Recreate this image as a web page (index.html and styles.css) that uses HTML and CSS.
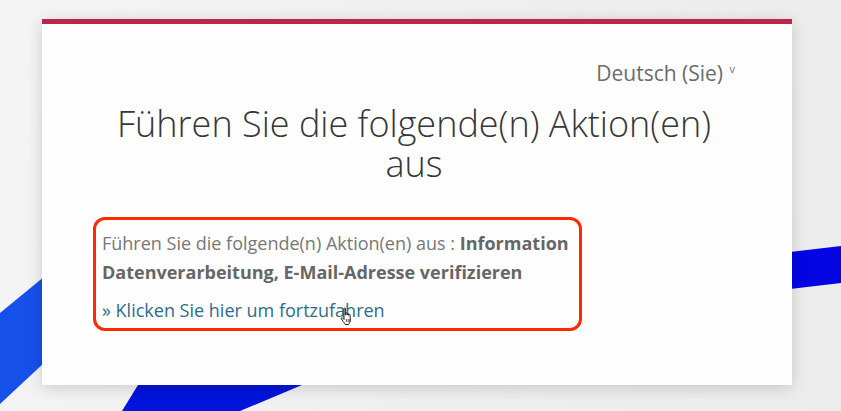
FILE: index.html
```html
<!DOCTYPE html>
<html lang="de">
<head>
    <meta charset="UTF-8">
    <meta name="viewport" content="width=device-width, initial-scale=1.0">
    <title>Aktionen erforderlich</title>
    <link rel="stylesheet" href="styles.css">
</head>
<body>
    <svg class="backdrop" width="841" height="411" viewBox="0 0 841 411" aria-hidden="true">
        <polygon points="0,313 45,276 45,362 0,404" fill="#1550ea"/>
        <polygon points="122,411 138,385 302,385 240,411" fill="#0014dc"/>
        <polygon points="790,252 841,246 841,283 790,289" fill="#0505e4"/>
    </svg>

    <div class="card">
        <div class="lang">Deutsch (Sie) <span class="caret">v</span></div>

        <h1 class="title">Führen Sie die folgende(n) Aktion(en) aus</h1>

        <div class="actions">
            <p class="required">Führen Sie die folgende(n) Aktion(en) aus : <b>Information Datenverarbeitung, E-Mail-Adresse verifizieren</b></p>
            <p class="proceed">
                <a href="#">» Klicken Sie hier um fortzufahren</a>
                <svg class="cursor" width="14" height="19" viewBox="0 0 14 19" aria-hidden="true">
                    <path d="M4 1.5c0-.8 1.4-.8 1.4 0V8h.2V6.3c0-.8 1.4-.8 1.4 0V8h.2V7c0-.8 1.4-.8 1.4 0v1.3h.2V8c0-.8 1.4-.8 1.4 0v5c0 2-1 3.5-1.5 4.5H5.2C4.4 16 2 13 1.3 11.8c-.5-.9.5-1.6 1.2-.9L4 12.5z" fill="#fff" stroke="#222" stroke-width="1" stroke-linejoin="round"/>
                    <path d="M6.3 12v3M8.2 12v3M10 12v3" stroke="#222" stroke-width=".8"/>
                </svg>
            </p>
        </div>
    </div>
</body>
</html>
```

FILE: styles.css
```css
body {
    margin: 0;
    height: 411px;
    overflow: hidden;
    background: linear-gradient(100deg, #f4f4f4 0%, #eeeeee 60%, #ececec 100%);
    font-family: "Open Sans", Arial, sans-serif;
    padding: 19px 0 0 42px;
    box-sizing: border-box;
    position: relative;
}

.backdrop {
    position: absolute;
    left: 0;
    top: 0;
}

.card {
    position: relative;
    width: 750px;
    height: 366px;
    box-sizing: border-box;
    background-color: #fefefe;
    border-top: 5px solid #b7284a;
    box-shadow: 0 3px 14px rgba(0, 0, 0, 0.16);
    padding: 33px 57px 0 51px;
}

.lang {
    text-align: right;
    font-size: 21px;
    line-height: 24px;
    color: #6b6b6b;
}

.lang .caret {
    font-size: 11px;
    vertical-align: 8px;
    margin-left: 1px;
}

.title {
    margin: 19px 0 0;
    text-align: center;
    font-weight: 300;
    font-size: 36px;
    line-height: 40px;
    color: #363636;
}

.actions {
    width: 489px;
    box-sizing: border-box;
    margin-top: 33px;
    border: 3px solid #ff2a00;
    border-radius: 12px;
    padding: 9px 6px 3px 6px;
    font-size: 18px;
    line-height: 29px;
}

.required {
    margin: 0;
    color: #777;
}

.required b {
    color: #666;
    font-weight: 700;
}

.proceed {
    position: relative;
    margin: 9px 0 0;
}

.proceed a {
    color: #2c6d8c;
    text-decoration: none;
}

.cursor {
    position: absolute;
    left: 238px;
    top: 11px;
}
```
